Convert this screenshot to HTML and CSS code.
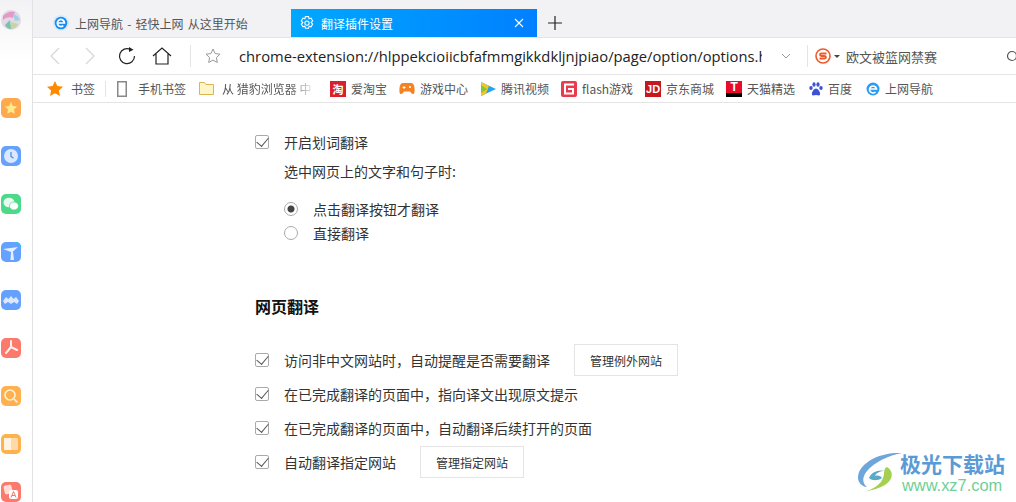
FILE: index.html
```html
<!DOCTYPE html>
<html lang="zh-CN">
<head>
    <meta charset="UTF-8">
    <title>翻译插件设置</title>
    <link rel="stylesheet" href="styles.css">
</head>
<body>
    <div class="browser">
        <aside class="sidebar">
            <svg class="avatar" width="20" height="20" viewBox="0 0 20 20">
                <circle cx="10" cy="10" r="10" fill="#e3d9e6"/>
                <path d="M2 6 Q8 0 14 2 L12 8 Q6 6 2 10Z" fill="#e59ac6"/>
                <path d="M12 4 Q17 5 19 10 L14 11Z" fill="#9fd0e6"/>
                <path d="M4 15 L9 10 L10 19 Q6 19 4 15Z" fill="#7cc0a8"/>
                <path d="M10 12 L17 14 Q15 19 10 19Z" fill="#c3d8a0"/>
            </svg>
            <div class="side-icons">
                <span class="side-icon si-orange">
                    <svg width="14" height="14" viewBox="0 0 14 14"><path d="M7 1l1.900 3.900 4.100.6-3 3 .7 4.300L7 10.800 3.300 12.800 4 8.500l-3-3 4.100-.6z" fill="#ffe98a"/></svg>
                </span>
                <span class="side-icon si-blue">
                    <svg width="16" height="16" viewBox="0 0 16 16"><circle cx="8" cy="8" r="7" fill="#dbe8ff"/><path d="M8 4v4.300l2.500 2" fill="none" stroke="#5c93ee" stroke-width="1.400"/></svg>
                </span>
                <span class="side-icon si-green">
                    <svg width="16" height="14" viewBox="0 0 16 14"><ellipse cx="6" cy="5.500" rx="5.500" ry="4.800" fill="#e6fbee"/><ellipse cx="11" cy="9" rx="4.500" ry="4" fill="#fff" stroke="#4cd98a" stroke-width=".7"/></svg>
                </span>
                <span class="side-icon si-blue">
                    <svg width="20" height="20" viewBox="0 0 20 20"><path d="M2 7l15-2-5 4.500L13 18H9.500l.5-8z" fill="#e3eeff"/><path d="M14 0h6v5z" fill="#2bc0f5"/></svg>
                </span>
                <span class="side-icon si-blue">
                    <svg width="16" height="10" viewBox="0 0 16 10"><path d="M0 6l3-4 2.500 2L8 1l2.500 3L13 2l3 4-2 3-3-2-3 2-3-2-3 2z" fill="#dbe8ff"/></svg>
                </span>
                <span class="side-icon si-red">
                    <svg width="14" height="16" viewBox="0 0 14 16"><path d="M7 1v6M7 7L2 13M7 7l6 3" fill="none" stroke="#fff0ec" stroke-width="2" stroke-linecap="round"/></svg>
                </span>
                <span class="side-icon si-amber">
                    <svg width="16" height="16" viewBox="0 0 16 16"><circle cx="7" cy="7" r="5" fill="none" stroke="#fff2dc" stroke-width="1.600"/><path d="M11 11l3.500 3.500" stroke="#fff2dc" stroke-width="1.600"/></svg>
                </span>
                <span class="side-icon si-amber">
                    <svg width="14" height="12" viewBox="0 0 14 12"><path d="M0 0h7v12H0z" fill="#fff4e0"/><path d="M7 0h7v12H7z" fill="#ffd9a6"/></svg>
                </span>
                <span class="side-icon si-red">
                    <svg width="16" height="16" viewBox="0 0 16 16"><rect x="1" y="1" width="8" height="9" rx="2" fill="#ffdcd6" transform="rotate(-12 5 5)"/><rect x="6" y="6" width="9" height="9" rx="2" fill="#fff"/><path d="M8 13.500l2.500-6 2.500 6M9 11.500h3" fill="none" stroke="#f0786c"/></svg>
                </span>
            </div>
        </aside>

        <div class="main">
            <div class="tabbar">
                <div class="tab">
                    <svg class="ie-icon" width="16" height="16" viewBox="0 0 14 14"><circle cx="7" cy="7" r="7" fill="#d6ebfb"/><circle cx="7" cy="7" r="5.500" fill="#1a8cf0"/><path d="M3.800 7h6.200a3.100 3.100 0 1 0-1 2.300" fill="none" stroke="#fff" stroke-width="1.500"/></svg>
                    <span class="tab-plain">上网导航 - 轻快上网 从这里开始</span>
                </div>
                <div class="tab tab-active">
                    <svg width="16" height="16" viewBox="1 0 14 15" fill="none" stroke="#fff"><path d="M6.500 1.500h3l.5 2 1.800-.6 1.500 2.600-1.400 1.500 1.400 1.500-1.500 2.600-1.800-.6-.5 2h-3l-.5-2-1.800.6-1.500-2.600L4.100 7 2.700 5.500l1.500-2.600 1.800.6z"/><circle cx="8" cy="7.600" r="2"/></svg>
                    <span class="tab-title">翻译插件设置</span>
                    <svg width="10" height="10" viewBox="0 0 10 10"><path d="M1 1l8 8M9 1l-8 8" stroke="#fff" stroke-width="1.100"/></svg>
                </div>
                <svg class="new-tab" width="14" height="14" viewBox="0 0 14 14"><path d="M7 0v14M0 7h14" stroke="#222" stroke-width="1.200"/></svg>
            </div>

            <div class="addressbar">
                <svg class="nav-btn back" width="12" height="18" viewBox="0 0 12 18"><path d="M10 1L2 9l8 8" fill="none" stroke="#d6d6d6" stroke-width="1.200"/></svg>
                <svg class="nav-btn forward" width="12" height="18" viewBox="0 0 12 18"><path d="M2 1l8 8-8 8" fill="none" stroke="#d6d6d6" stroke-width="1.200"/></svg>
                <svg class="nav-btn reload" width="18" height="18" viewBox="0 0 18 18"><path d="M12.500 2.500A7.500 7.500 0 1 0 16.500 9" fill="none" stroke="#222" stroke-width="1.200"/><path d="M11 0l4.500 2.800L11 5z" fill="#222"/></svg>
                <svg class="nav-btn home" width="20" height="18" viewBox="0 0 20 18"><path d="M1 9l9-8 9 8M4 7v10h12V7" fill="none" stroke="#222" stroke-width="1.200"/></svg>
                <i class="vsep"></i>
                <svg class="nav-btn star" width="16" height="16" viewBox="0 0 16 16"><path d="M8 1l2.100 4.600 4.900.6-3.600 3.400.9 4.900L8 12.100l-4.300 2.400.9-4.900L1 6.200l4.900-.6z" fill="none" stroke="#999"/></svg>
                <div class="url">chrome-extension://hlppekcioiicbfafmmgikkdkljnjpiao/page/option/options.html</div>
                <svg class="url-arrow" width="10" height="6" viewBox="0 0 10 6"><path d="M1 1l4 4 4-4" fill="none" stroke="#999"/></svg>
                <i class="vsep"></i>
                <svg class="sogou" width="16" height="16" viewBox="0 0 16 16"><circle cx="8" cy="8" r="7" fill="none" stroke="#f0582a" stroke-width="1.600"/><path d="M11.500 5.500H6.500q-1.500 0-1.500 1.200t1.500 1.300h3q1.500.100 1.500 1.300t-1.500 1.200H4.500" fill="none" stroke="#f0582a" stroke-width="1.800"/></svg>
                <i class="caret"></i>
                <span class="search-text">欧文被篮网禁赛</span>
                <svg class="search-icon" width="12" height="12" viewBox="0 0 12 12"><circle cx="6" cy="6" r="4.500" fill="none" stroke="#555" stroke-width="1.200"/></svg>
            </div>

            <div class="bookmarks">
                <a class="bm bm-first">
                    <svg width="16" height="15" viewBox="0 0 16 15"><path d="M8 0l2.400 5 5.600.7-4.100 3.800 1.100 5.500L8 12.300 3 15l1.100-5.500L0 5.700 5.600 5z" fill="#ff8a00"/></svg>
                    <span>书签</span>
                </a>
                <i class="bm-sep"></i>
                <a class="bm bm-phone">
                    <svg width="10" height="16" viewBox="0 0 10 16"><rect x=".75" y=".75" width="8.500" height="14.500" fill="none" stroke="#888" stroke-width="1.500"/></svg>
                    <span>手机书签</span>
                </a>
                <a class="bm bm-folder">
                    <svg width="15" height="13" viewBox="0 0 15 13"><path d="M.5 12.500V.5h5l1.500 2h7.500v10z" fill="#fff6c8" stroke="#dcb456"/></svg>
                    <span class="fade-text">从 猎豹浏览器 中</span>
                </a>
                <a class="bm">
                    <b class="bm-logo logo-taobao">淘</b>
                    <span>爱淘宝</span>
                </a>
                <a class="bm">
                    <svg width="16" height="13" viewBox="0 0 16 13"><path d="M4 1h8q3 0 3.500 5t-1 6q-1.500.5-3.500-2.500H5Q3 12.500 1.500 12T.5 6Q1 1 4 1z" fill="#f58220"/><circle cx="11" cy="5" r="1" fill="#fff"/><path d="M3.500 5.500h3M5 4v3" stroke="#fff"/></svg>
                    <span>游戏中心</span>
                </a>
                <a class="bm">
                    <svg width="16" height="14" viewBox="0 0 16 14"><path d="M1 0l15 7-15 7z" fill="#21a5f0"/><path d="M1 0l8 3.700-3 8L1 14z" fill="#f7c325"/><path d="M1 3v8l6-4z" fill="#7dc83c"/></svg>
                    <span>腾讯视频</span>
                </a>
                <a class="bm">
                    <svg width="16" height="16" viewBox="0 0 16 16"><rect width="16" height="16" rx="2" fill="#ea3a4e"/><path d="M13 3.500H4v9h8V8H7" fill="none" stroke="#fff" stroke-width="2"/></svg>
                    <span>flash游戏</span>
                </a>
                <a class="bm">
                    <b class="bm-logo logo-jd">JD</b>
                    <span>京东商城</span>
                </a>
                <a class="bm">
                    <b class="bm-logo logo-tmall">T</b>
                    <span>天猫精选</span>
                </a>
                <a class="bm bm-pad">
                    <svg width="14" height="14" viewBox="0 0 14 14" fill="#3d50d8"><ellipse cx="2" cy="6" rx="1.700" ry="2"/><ellipse cx="5" cy="2.500" rx="1.600" ry="2.200"/><ellipse cx="9" cy="2.500" rx="1.600" ry="2.200"/><ellipse cx="12" cy="6" rx="1.700" ry="2"/><path d="M7 6.500q2 0 3.500 3t-.5 4q-3-1-6 0-2-1-.5-4t3.500-3z"/></svg>
                    <span>百度</span>
                </a>
                <a class="bm bm-pad">
                    <svg width="14" height="14" viewBox="0 0 14 14"><circle cx="7" cy="7" r="6.500" fill="#2c9cf2"/><path d="M3 7h7.500A3.500 3.500 0 1 0 9.500 10" fill="none" stroke="#fff" stroke-width="1.700"/></svg>
                    <span>上网导航</span>
                </a>
            </div>

            <div class="page">
                <div class="option option-first">
                    <i class="check"></i>
                    <label>开启划词翻译</label>
                </div>
                <p class="hint">选中网页上的文字和句子时:</p>
                <div class="radios">
                    <div class="radio-row"><i class="radio radio-on"></i><label>点击翻译按钮才翻译</label></div>
                    <div class="radio-row"><i class="radio"></i><label>直接翻译</label></div>
                </div>

                <h2 class="section-title">网页翻译</h2>

                <div class="option-list">
                    <div class="option">
                        <i class="check"></i>
                        <label>访问非中文网站时，自动提醒是否需要翻译</label>
                        <button>管理例外网站</button>
                    </div>
                    <div class="option">
                        <i class="check"></i>
                        <label>在已完成翻译的页面中，指向译文出现原文提示</label>
                    </div>
                    <div class="option">
                        <i class="check"></i>
                        <label>在已完成翻译的页面中，自动翻译后续打开的页面</label>
                    </div>
                    <div class="option">
                        <i class="check"></i>
                        <label>自动翻译指定网站</label>
                        <button>管理指定网站</button>
                    </div>
                </div>
            </div>
        </div>
    </div>

    <div class="watermark">
        <svg width="46" height="40" viewBox="0 0 46 40">
            <path d="M45 1C25 0 8 8 2 20c-3 8 1 14 8 15-5-4-5-10 0-16C18 10 30 4 45 1z" fill="#6ea6dc"/>
            <path d="M30 15c8 5 6 15-6 20-7 3-14 4-18 5 10-2 18-8 20-14 2-5 0-9 4-11z" fill="#a5cf4f"/>
            <path d="M12 26c2-6 10-9 16-7-5 0-9 2-10 5 3-1 6 0 7 2-4 3-10 3-13 0z" fill="#5aa9c9"/>
        </svg>
        <div class="wm-text">
            <span class="wm-name">极光下载站</span>
            <span class="wm-url">www.xz7.com</span>
        </div>
    </div>
</body>
</html>
```

FILE: styles.css
```css
* {
    box-sizing: border-box;
}
html, body {
    height: 100%;
}
body {
    margin: 0;
    overflow: hidden;
    background-color: #fff;
    color: #333;
    font-family: "Noto Sans CJK SC", "Open Sans", sans-serif;
}
label {
    display: block;
}

.browser {
    display: flex;
    height: 502px;
}

/* left strip */
.sidebar {
    width: 33px;
    flex: none;
    padding-top: 10px;
    background: linear-gradient(#f2f2f4, #fff 60px);
    border-right: 1px solid #e2e2e2;
}
.avatar {
    display: block;
    margin-left: 1px;
}
.side-icons {
    display: flex;
    flex-direction: column;
    gap: 28px;
    margin-top: 68px;
    margin-left: 1px;
}
.side-icon {
    display: flex;
    align-items: center;
    justify-content: center;
    width: 20px;
    height: 20px;
    border-radius: 5px;
    overflow: hidden;
}
.si-orange { background-color: #ffa94f; }
.si-blue { background-color: #65a2ff; }
.si-green { background-color: #4cd98a; }
.si-red { background-color: #fb7a6c; }
.si-amber { background-color: #ffb14d; }

.main {
    flex: 1;
    min-width: 0;
}

/* tabs */
.tabbar {
    display: flex;
    align-items: flex-end;
    height: 38px;
    background-color: #f2f2f4;
    border-bottom: 1px solid #e4e4e4;
}
.tab {
    display: flex;
    align-items: center;
    width: 258px;
    height: 28px;
    padding-left: 20px;
    font-size: 12px;
    color: #555;
}
.tab-plain {
    word-spacing: 1.500px;
}
.ie-icon {
    margin-right: 6px;
}
.tab-active {
    width: 246px;
    padding: 0 13px 0 8px;
    background: linear-gradient(90deg, #00a8ff, #0080ff);
    color: #fff;
}
.tab-title {
    flex: 1;
    margin-left: 6px;
}
.new-tab {
    margin: 0 0 7px 11px;
}

/* address bar */
.addressbar {
    display: flex;
    align-items: center;
    height: 37px;
    border-bottom: 1px solid #e4e4e4;
    white-space: nowrap;
}
.nav-btn {
    flex: none;
}
.back { margin-left: 16px; }
.forward { margin-left: 23px; }
.reload { margin-left: 22px; }
.home { margin-left: 16px; }
.star { margin-left: 14px; }
.vsep {
    flex: none;
    width: 1px;
    height: 22px;
    background-color: #e4e4e4;
}
.home + .vsep { margin-left: 18px; }
.url {
    width: 523px;
    flex: none;
    margin: 0 1px 0 18px;
    overflow: hidden;
    font-family: "Open Sans", sans-serif;
    font-size: 14.750px;
    color: #222;
}
.url-arrow {
    flex: none;
    margin: 0 16px 0 18px;
}
.sogou {
    flex: none;
    margin-left: 7px;
}
.caret {
    flex: none;
    margin-left: 3px;
    border-top: 3px solid #444;
    border-left: 3px solid transparent;
    border-right: 3px solid transparent;
}
.search-text {
    margin-left: 6px;
    font-size: 13px;
    color: #555;
}
.search-icon {
    flex: none;
    margin-left: 69px;
}

/* bookmarks */
.bookmarks {
    display: flex;
    align-items: center;
    height: 28px;
    padding-left: 14px;
    border-bottom: 1px solid #e4e4e4;
    font-size: 12px;
    color: #555;
    white-space: nowrap;
}
.bm {
    display: flex;
    align-items: center;
    gap: 5px;
    margin-right: 12px;
}
.bm-first {
    gap: 8px;
    margin-right: 10px;
}
.bm-sep {
    width: 1px;
    height: 16px;
    margin-right: 11px;
    background-color: #e4e4e4;
}
.bm-phone {
    gap: 11px;
    margin-right: 13px;
}
.bm-folder {
    gap: 8px;
    margin-right: 14px;
}
.bm-pad {
    margin-left: 2px;
}
.fade-text {
    width: 94px;
    -webkit-mask-image: linear-gradient(90deg, #000 70%, transparent);
    mask-image: linear-gradient(90deg, #000 70%, transparent);
}
.bm-logo {
    display: flex;
    align-items: center;
    justify-content: center;
    width: 16px;
    height: 16px;
    color: #fff;
    font-family: "Liberation Sans", sans-serif;
}
.logo-taobao {
    background-color: #d9202e;
    font-size: 11px;
    font-family: "Noto Sans CJK SC", sans-serif;
}
.logo-jd {
    background-color: #c8161d;
    font-size: 11px;
}
.logo-tmall {
    background: linear-gradient(#ea0b2a 75%, #000 75%);
    font-size: 12px;
    line-height: 12px;
    align-items: flex-start;
}

/* option page */
.page {
    padding: 28px 0 0 222px;
    font-size: 14px;
    color: #333;
}
.option {
    display: flex;
    align-items: center;
    height: 34px;
}
.option-first {
    height: 22px;
}
.option label {
    margin-left: 15px;
}
.check {
    position: relative;
    width: 14px;
    height: 14px;
    flex: none;
    background-color: #fff;
    border: 1px solid #aaa;
    border-radius: 2px;
}
.check::after {
    content: "";
    position: absolute;
    left: 3px;
    top: -1px;
    width: 6px;
    height: 10px;
    border-right: 1.500px solid #555;
    border-bottom: 1.500px solid #555;
    transform: rotate(40deg);
}
.hint {
    margin: 7px 0 0 29px;
    line-height: 22px;
}
.radios {
    margin: 15px 0 0 29px;
}
.radio-row {
    display: flex;
    align-items: center;
    height: 24px;
}
.radio-row label {
    margin-left: 15px;
}
.radio {
    width: 14px;
    height: 14px;
    flex: none;
    border: 1px solid #aaa;
    border-radius: 50%;
}
.radio-on {
    background: radial-gradient(circle, #444 3px, #fff 4px);
}
.section-title {
    margin: 49px 0 0;
    font-size: 16px;
    line-height: 24px;
    font-weight: 700;
    color: #111;
}
.option-list {
    margin-top: 25px;
}
.option button {
    margin-left: 24px;
}
button {
    width: 104px;
    height: 32px;
    padding: 0;
    background-color: #fff;
    border: 1px solid #e4e4e4;
    font-family: inherit;
    font-size: 12px;
    color: #333;
}

/* site stamp over the page */
.watermark {
    position: absolute;
    left: 857px;
    top: 452px;
    display: flex;
    gap: 0;
}
.wm-text {
    display: flex;
    flex-direction: column;
    margin-left: -3px;
}
.wm-name {
    font-size: 21px;
    line-height: 22px;
    font-weight: 700;
    color: #5b9bd5;
    white-space: nowrap;
}
.wm-url {
    margin: 3px 0 0 2px;
    font-family: "Liberation Sans", sans-serif;
    font-size: 16.400px;
    line-height: 16px;
    color: #6fcf97;
}
```
